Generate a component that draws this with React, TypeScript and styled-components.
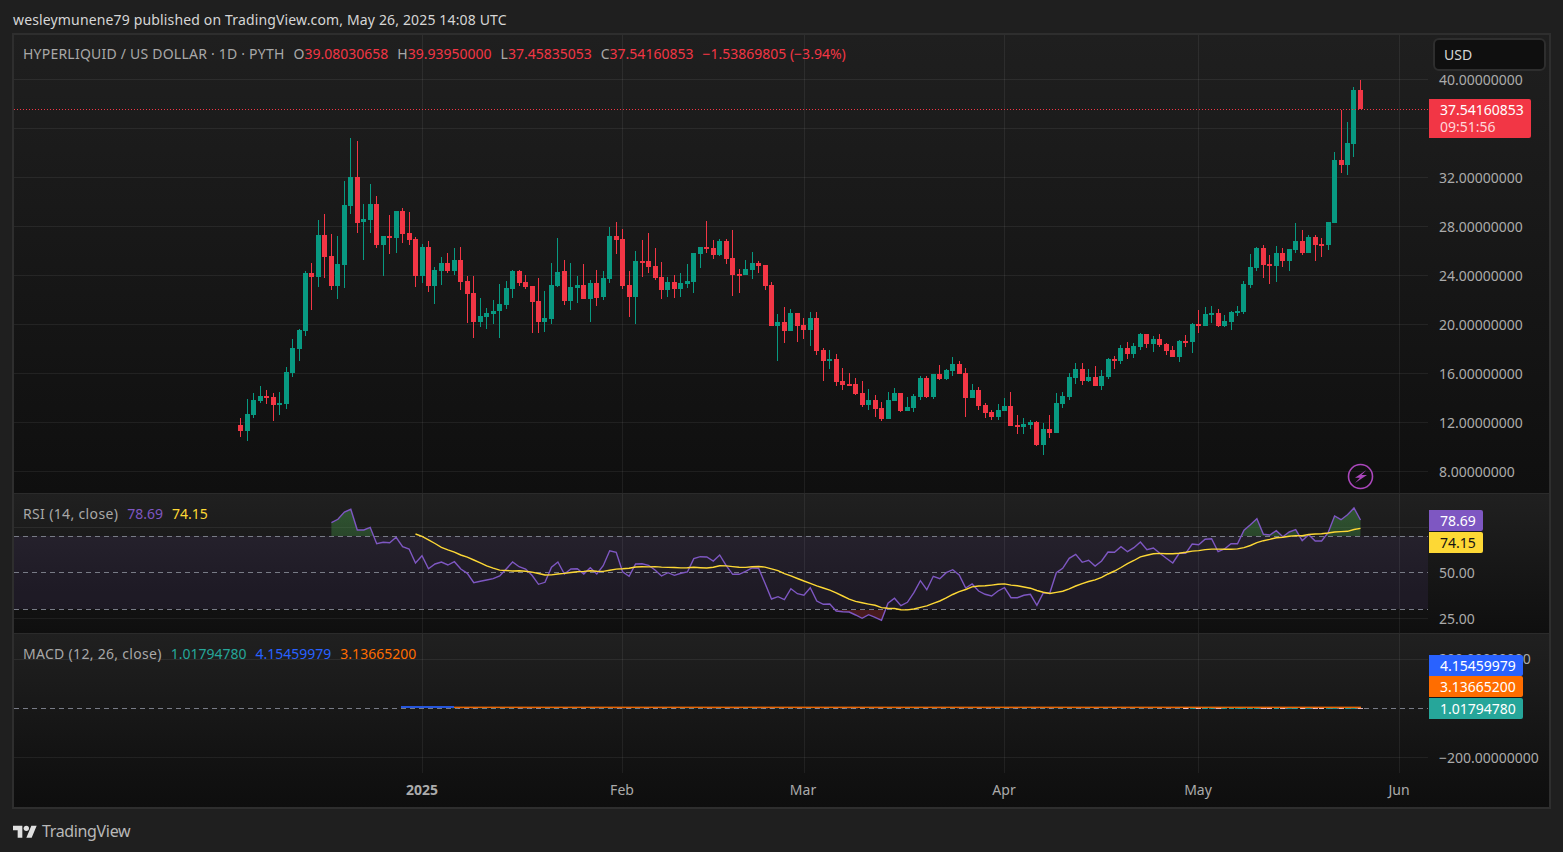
import React from "react";
import styled, { createGlobalStyle } from "styled-components";

const UP = "#089981";
const DOWN = "#f23645";
const GRID = "rgba(255, 255, 255, 0.065)";
const GUIDE = "#787b86";
const PURPLE = "#7e57c2";
const YELLOW = "#fdd835";
const GRID_X = [422, 622, 804, 1004, 1198, 1399];

type Row = [number, number, number, number, number];

// rows are [up, wickTop, bodyTop, bodyBottom, wickBottom], read off 3x crops
const rows = (offset: number, list: Row[]) =>
  list.map(([up, wt, bt, bb, wb]) => ({
    up: up === 1,
    wickTop: Math.round(offset + wt / 3),
    bodyTop: Math.round(offset + bt / 3),
    bodyBottom: Math.round(offset + bb / 3),
    wickBottom: Math.round(offset + wb / 3),
  }));

const candles = [
  ...rows(130, [
    [0, 865, 885, 903, 920], [1, 808, 852, 903, 932], [1, 790, 810, 855, 863], [1, 769, 798, 813, 818],
    [0, 781, 798, 804, 821], [0, 790, 801, 825, 873], [1, 786, 819, 821, 855], [1, 712, 726, 822, 837],
    [1, 628, 654, 729, 740], [1, 597, 600, 657, 693], [1, 423, 429, 603, 617], [0, 400, 429, 441, 540],
    [1, 270, 315, 441, 471], [0, 252, 315, 381, 444], [0, 312, 378, 468, 480], [1, 318, 402, 468, 507],
    [1, 153, 225, 405, 474], [1, 24, 141, 228, 252], [0, 33, 141, 279, 309], [1, 222, 267, 276, 390],
    [1, 162, 222, 270, 309], [0, 198, 222, 345, 354], [1, 318, 318, 345, 438], [0, 255, 318, 324, 372],
    [1, 243, 243, 324, 369], [0, 234, 243, 312, 339], [0, 246, 309, 330, 345], [0, 321, 327, 438, 471],
    [1, 342, 351, 438, 459], [0, 333, 351, 468, 486], [1, 411, 420, 468, 522], [1, 381, 399, 423, 465],
    [0, 369, 399, 423, 429], [1, 354, 390, 423, 435], [0, 351, 390, 456, 480], [0, 438, 453, 492, 579],
    [0, 438, 489, 576, 624], [1, 504, 558, 576, 591], [1, 534, 549, 561, 597], [1, 510, 543, 552, 582],
    [1, 462, 522, 543, 624], [1, 453, 474, 525, 537], [1, 420, 423, 477, 504], [0, 420, 423, 459, 468],
    [0, 435, 456, 471, 477],
  ]),
  ...rows(210, [
    [0, 228, 228, 276, 369], [0, 204, 273, 336, 369], [1, 243, 324, 336, 366], [1, 159, 225, 327, 342],
    [1, 84, 186, 228, 231], [0, 150, 183, 273, 285], [1, 159, 231, 273, 300], [1, 198, 225, 234, 279],
    [0, 162, 225, 267, 267], [1, 210, 219, 267, 336], [0, 180, 219, 264, 288], [1, 183, 204, 261, 270],
    [1, 51, 78, 207, 219], [0, 36, 78, 90, 132], [0, 57, 87, 228, 237], [0, 183, 225, 261, 321],
    [1, 123, 153, 261, 342], [0, 90, 153, 156, 201], [0, 69, 153, 171, 189], [0, 114, 168, 204, 210],
    [0, 156, 201, 240, 267], [1, 201, 216, 240, 261], [0, 195, 216, 237, 264], [1, 189, 219, 237, 261],
    [1, 162, 213, 222, 234], [1, 129, 129, 216, 249], [1, 111, 111, 132, 174], [0, 33, 111, 114, 129],
    [0, 90, 114, 135, 147], [1, 87, 93, 135, 138], [0, 87, 93, 147, 162], [0, 60, 144, 195, 258],
    [0, 177, 192, 195, 249], [1, 150, 177, 195, 195], [1, 126, 159, 180, 207], [0, 153, 159, 168, 189],
    [0, 165, 165, 228, 240], [0, 216, 225, 348, 348], [1, 312, 336, 348, 453], [0, 291, 336, 363, 399],
    [1, 297, 309, 363, 363], [0, 309, 309, 348, 396], [0, 324, 345, 360, 387], [1, 306, 324, 360, 408],
    [0, 306, 324, 423, 435],
  ]),
  ...rows(300, [
    [0, 144, 150, 183, 243], [1, 150, 177, 183, 207], [0, 162, 177, 246, 258], [0, 204, 243, 255, 270],
    [0, 219, 252, 255, 255], [0, 234, 252, 282, 285], [0, 243, 279, 315, 321], [1, 267, 300, 315, 330],
    [0, 285, 300, 327, 351], [0, 306, 324, 357, 363], [1, 276, 300, 357, 357], [1, 264, 279, 303, 303],
    [0, 279, 279, 333, 336], [1, 291, 321, 333, 333], [1, 282, 288, 324, 336], [1, 228, 234, 291, 300],
    [0, 228, 234, 291, 294], [1, 222, 222, 291, 297], [0, 195, 222, 237, 240], [1, 207, 210, 237, 240],
    [1, 171, 192, 213, 228], [0, 183, 192, 222, 222], [0, 204, 219, 294, 351], [1, 252, 270, 294, 294],
    [0, 261, 270, 318, 330], [0, 309, 315, 339, 354], [0, 330, 336, 351, 360], [1, 312, 330, 351, 360],
    [1, 294, 318, 333, 333], [0, 276, 318, 378, 378], [0, 345, 375, 378, 402], [1, 354, 372, 381, 402],
    [1, 360, 366, 375, 387], [0, 363, 366, 435, 438],
  ]),
  ...rows(210, [
    [1, 639, 657, 705, 735], [0, 615, 657, 669, 684], [1, 549, 579, 669, 669], [1, 546, 558, 582, 594],
    [1, 489, 501, 561, 570], [1, 459, 477, 504, 522], [0, 459, 477, 513, 525], [1, 477, 501, 513, 516],
    [0, 468, 501, 528, 528], [1, 480, 498, 528, 540], [1, 444, 447, 501, 507], [0, 438, 447, 450, 477],
    [1, 405, 414, 453, 462], [0, 396, 414, 432, 447], [1, 399, 408, 432, 444], [1, 369, 372, 411, 420],
    [0, 372, 372, 402, 414], [1, 378, 387, 402, 426], [0, 372, 387, 405, 411], [0, 399, 402, 423, 435],
    [0, 408, 420, 441, 441], [1, 390, 393, 441, 456], [0, 375, 393, 396, 411], [1, 339, 342, 396, 429],
    [0, 300, 342, 345, 369], [1, 291, 312, 348, 348], [1, 288, 309, 315, 339], [0, 297, 309, 348, 351],
    [1, 315, 333, 348, 351], [1, 303, 306, 336, 360], [1, 288, 303, 309, 318], [1, 213, 222, 306, 312],
    [1, 132, 171, 225, 234], [1, 111, 114, 174, 183], [0, 105, 114, 165, 204], [0, 135, 162, 165, 222],
    [1, 108, 129, 168, 216], [0, 114, 129, 153, 171], [1, 117, 117, 153, 183], [1, 39, 93, 120, 129],
    [0, 60, 93, 129, 135], [1, 75, 81, 129, 129], [0, 75, 81, 105, 153], [0, 84, 102, 105, 141],
    [1, 36, 36, 105, 120],
  ]),
  ...rows(30, [
    [1, 366, 390, 579, 579], [0, 240, 390, 405, 429], [1, 276, 339, 405, 435], [1, 171, 180, 342, 381],
    [0, 150, 180, 238, 238],
  ]),
];

const RSI_START = 14;
const rsiRaw = [
  68, 58, 36, 28, 90, 90, 82, 131, 127, 128, 112, 140, 147, 189, 167, 206, 192, 186, 195, 185,
  207, 220, 248, 244, 240, 236, 228, 207, 186, 200, 207, 226, 253, 247, 202, 186, 222, 207, 206, 222,
  203, 222, 197, 152, 157, 215, 229, 192, 191, 196, 210, 228, 218, 226, 220, 216, 176, 170, 171, 183,
  165, 197, 223, 223, 214, 204, 205, 250, 297, 290, 299, 266, 281, 286, 263, 303, 313, 312, 333,
  335, 336, 345, 355, 344, 352, 361, 310, 295, 317, 307, 278, 242, 269, 229, 236, 218, 209, 225, 264,
  252, 273, 283, 288, 273, 263, 293, 293, 286, 283, 316, 279, 279, 218, 205, 175, 163, 187, 181, 198,
  183, 156, 157, 140, 155, 143, 126, 149, 144, 160, 175, 189, 160, 160, 132, 134, 118, 116, 155, 147,
  131, 131, 91, 74, 56, 103, 105, 92, 110, 96, 89, 122, 104, 123, 123, 98, 48, 59, 44, 24, 60,
];

const candleX = (i: number) => Math.round(240.3 + i * 6.472);
const lineX = (i: number) => 240.8 + i * 6.472;

const rsiPoints = rsiRaw.map((v, i) => ({ x: lineX(i + RSI_START), y: 500 + v / 3 }));
const maPoints = rsiRaw
  .map((_, i) => {
    if (i < 13) return null;
    const sum = rsiRaw.slice(i - 13, i + 1).reduce((a, b) => a + b, 0);
    return { x: lineX(i + RSI_START), y: 500 + sum / 14 / 3 };
  })
  .filter((p): p is { x: number; y: number } => p !== null);

const toPath = (pts: { x: number; y: number }[]) =>
  pts.map((p) => `${p.x.toFixed(1)},${p.y.toFixed(1)}`).join(" ");

const areaTo = (level: number) => {
  const first = rsiPoints[0];
  const last = rsiPoints[rsiPoints.length - 1];
  return `${first.x},${level} ${toPath(rsiPoints)} ${last.x},${level}`;
};

const GlobalStyle = createGlobalStyle`
  html, body {
    margin: 0;
    background: #1f1f1f;
  }
  body {
    font-family: "Noto Sans", "Open Sans", sans-serif;
    overflow: hidden;
  }
`;

const Page = styled.div`
  width: 1563px;
  height: 852px;
  display: flex;
  flex-direction: column;
  background: #1f1f1f;
`;

const Header = styled.div`
  height: 33px;
  padding: 5px 0 0 13px;
  box-sizing: border-box;
  display: flex;
  align-items: center;
  font-size: 14px;
  letter-spacing: 0.15px;
  color: #d6d6d6;
`;

const ChartFrame = styled.div`
  width: 1539px;
  margin-left: 12px;
  box-sizing: border-box;
  border: 2px solid #2e2e2e;
  display: flex;
  flex-direction: column;
`;

const Pane = styled.div<{ $height: number; $from: string; $to: string; $divider?: boolean }>`
  height: ${(p) => p.$height}px;
  box-sizing: border-box;
  display: grid;
  grid-template-columns: 1414px 121px;
  background: linear-gradient(${(p) => p.$from}, ${(p) => p.$to});
  border-bottom: ${(p) => (p.$divider ? "1px solid #2b2b2b" : "none")};
`;

const Plot = styled.div`
  position: relative;
  overflow: hidden;
`;

const PlotSvg = styled.svg`
  display: block;
`;

const PriceAxis = styled.div`
  position: relative;
`;

const Legend = styled.div<{ $top: number }>`
  position: absolute;
  top: ${(p) => p.$top}px;
  left: 9px;
  display: flex;
  gap: 9px;
  font-size: 14px;
  line-height: 20px;
  white-space: nowrap;
  color: #a8a8a8;
`;

const LegendName = styled.span<{ $spacing: number }>`
  letter-spacing: ${(p) => p.$spacing}px;
`;

const LegendValue = styled.span<{ $color: string }>`
  color: ${(p) => p.$color};
`;

const AxisLabel = styled.div<{ $y: number }>`
  position: absolute;
  left: 11px;
  top: ${(p) => p.$y}px;
  transform: translateY(-50%);
  font-size: 14px;
  line-height: 20px;
  color: #ababab;
  white-space: nowrap;
`;

const PriceTag = styled.div<{ $top: number; $height: number; $width: number; $bg: string; $color: string }>`
  position: absolute;
  left: 1px;
  top: ${(p) => p.$top}px;
  width: ${(p) => p.$width}px;
  height: ${(p) => p.$height}px;
  box-sizing: border-box;
  padding-left: 11px;
  display: flex;
  flex-direction: column;
  justify-content: center;
  background: ${(p) => p.$bg};
  color: ${(p) => p.$color};
  border-radius: 0 2px 2px 0;
  font-size: 14px;
  line-height: 17px;
  white-space: nowrap;
`;

const LastPriceTag = styled(PriceTag)`
  padding-bottom: 2px;
`;

const Countdown = styled.span`
  color: #ffd5d8;
`;

const CurrencyButton = styled.div`
  position: absolute;
  top: 3px;
  left: 5px;
  width: 113px;
  height: 33px;
  box-sizing: border-box;
  padding-left: 9px;
  display: flex;
  align-items: center;
  background: #0f0f0f;
  border: 2px solid #2e2e2e;
  border-radius: 6px;
  font-size: 14px;
  color: #d6d6d6;
`;

const TimeAxis = styled.div`
  position: relative;
  height: 34px;
  background: linear-gradient(#111111, #0e0e0e);
`;

const TimeLabel = styled.div<{ $x: number; $bold?: boolean }>`
  position: absolute;
  top: 7px;
  left: ${(p) => p.$x}px;
  transform: translateX(-50%);
  font-size: 14px;
  line-height: 20px;
  font-weight: ${(p) => (p.$bold ? 700 : 400)};
  color: #ababab;
`;

const Footer = styled.div`
  flex: 1;
  padding-left: 13px;
  display: flex;
  align-items: center;
  gap: 5px;
`;

const Wordmark = styled.span`
  font-size: 16px;
  letter-spacing: -0.35px;
  color: #b8b8b8;
`;

const VerticalGrid = ({ top, bottom }: { top: number; bottom: number }) => (
  <g shapeRendering="crispEdges">
    {GRID_X.map((x) => (
      <line key={x} x1={x + 0.5} x2={x + 0.5} y1={top} y2={bottom} stroke={GRID} />
    ))}
  </g>
);

const HorizontalGrid = ({ levels }: { levels: number[] }) => (
  <g shapeRendering="crispEdges">
    {levels.map((y) => (
      <line key={y} x1={14} x2={1428} y1={y + 0.5} y2={y + 0.5} stroke={GRID} />
    ))}
  </g>
);

const Guide = ({ y }: { y: number }) => (
  <line x1={14} x2={1428} y1={y + 0.5} y2={y + 0.5} stroke={GUIDE} strokeDasharray="5 4" shapeRendering="crispEdges" />
);

const CandleSeries = () => (
  <g shapeRendering="crispEdges">
    {candles.map((c, i) => {
      const x = candleX(i);
      const fill = c.up ? UP : DOWN;
      return (
        <g key={i} fill={fill}>
          <rect x={x} y={c.wickTop} width={1} height={Math.max(c.wickBottom - c.wickTop, 1)} />
          <rect x={x - 2} y={c.bodyTop} width={5} height={Math.max(c.bodyBottom - c.bodyTop, 2)} />
        </g>
      );
    })}
  </g>
);

const MainPlot = () => (
  <PlotSvg width={1414} height={458} viewBox="14 35 1414 458">
    <VerticalGrid top={35} bottom={493} />
    <HorizontalGrid levels={[79, 128, 177, 226, 275, 324, 373, 422, 471]} />
    <CandleSeries />
    <line x1={14} x2={1428} y1={109.5} y2={109.5} stroke={DOWN} strokeDasharray="1 2" shapeRendering="crispEdges" />
    <circle cx={1360.5} cy={476.5} r={12} fill="none" stroke="#ab47bc" strokeWidth={1.6} />
    <path d="M1366.5 470 L1355 477.8 L1360 477.8 L1355 483 L1367 475 L1361.5 475 Z" fill="#ab47bc" />
  </PlotSvg>
);

const RsiPlot = () => (
  <PlotSvg width={1414} height={139} viewBox="14 494 1414 139">
    <defs>
      <linearGradient id="overbought" x1="0" y1="0" x2="0" y2="1">
        <stop offset="0" stopColor="#4caf50" stopOpacity={0.38} />
        <stop offset="1" stopColor="#4caf50" stopOpacity={0.05} />
      </linearGradient>
      <linearGradient id="oversold" x1="0" y1="0" x2="0" y2="1">
        <stop offset="0" stopColor="#f23645" stopOpacity={0.05} />
        <stop offset="1" stopColor="#f23645" stopOpacity={0.25} />
      </linearGradient>
      <clipPath id="aboveBand">
        <rect x={14} y={494} width={1414} height={42} />
      </clipPath>
      <clipPath id="belowBand">
        <rect x={14} y={610} width={1414} height={23} />
      </clipPath>
    </defs>
    <rect x={14} y={536} width={1414} height={73} fill={PURPLE} fillOpacity={0.1} />
    <VerticalGrid top={494} bottom={633} />
    <HorizontalGrid levels={[527, 618]} />
    <Guide y={536} />
    <Guide y={572} />
    <Guide y={609} />
    <polygon points={areaTo(536)} fill="url(#overbought)" clipPath="url(#aboveBand)" />
    <polygon points={areaTo(609)} fill="url(#oversold)" clipPath="url(#belowBand)" />
    <polyline points={toPath(rsiPoints)} fill="none" stroke={PURPLE} strokeWidth={1.4} />
    <polyline points={toPath(maPoints)} fill="none" stroke={YELLOW} strokeWidth={1.4} />
  </PlotSvg>
);

const MacdPlot = () => (
  <PlotSvg width={1414} height={139} viewBox="14 634 1414 139">
    <VerticalGrid top={634} bottom={773} />
    <HorizontalGrid levels={[659, 757]} />
    <Guide y={708} />
    <g shapeRendering="crispEdges">
      {candles.map((c, i) =>
        i < 33 ? null : (
          <rect
            key={i}
            x={candleX(i) - 2}
            y={708}
            width={5}
            height={1}
            fill={c.up ? "#26a69a" : "#ffcdd2"}
            fillOpacity={i > 145 ? 0.85 : 0.15}
          />
        )
      )}
      <rect x={401} y={706} width={53} height={2} fill="#2962ff" fillOpacity={0.85} />
      <rect x={454} y={707} width={907} height={1} fill="#ff6d00" fillOpacity={0.9} />
      <rect x={454} y={706} width={907} height={1} fill="#ff6d00" fillOpacity={0.35} />
    </g>
  </PlotSvg>
);

const TradingViewLogo = () => (
  <svg width={24} height={16} viewBox="0 0 36 24" fill="#e0e0e0">
    <path d="M14 22H7V11H0V4h14v18zM28 22h-8l7.5-18h8L28 22z" />
    <circle cx={20} cy={8} r={4} />
  </svg>
);

const App = () => (
  <Page>
    <GlobalStyle />
    <Header>wesleymunene79 published on TradingView.com, May 26, 2025 14:08 UTC</Header>
    <ChartFrame>
      <Pane $height={459} $from="#1f1f1f" $to="#0f0f0f" $divider>
        <Plot>
          <MainPlot />
          <Legend $top={9}>
            <LegendName $spacing={0.22}>HYPERLIQUID / US DOLLAR · 1D · PYTH</LegendName>
            <span>O<LegendValue $color={DOWN}>39.08030658</LegendValue></span>
            <span>H<LegendValue $color={DOWN}>39.93950000</LegendValue></span>
            <span>L<LegendValue $color={DOWN}>37.45835053</LegendValue></span>
            <span>C<LegendValue $color={DOWN}>37.54160853</LegendValue></span>
            <LegendValue $color={DOWN}>−1.53869805 (−3.94%)</LegendValue>
          </Legend>
        </Plot>
        <PriceAxis>
          <AxisLabel $y={45}>40.00000000</AxisLabel>
          <AxisLabel $y={143}>32.00000000</AxisLabel>
          <AxisLabel $y={192}>28.00000000</AxisLabel>
          <AxisLabel $y={241}>24.00000000</AxisLabel>
          <AxisLabel $y={290}>20.00000000</AxisLabel>
          <AxisLabel $y={339}>16.00000000</AxisLabel>
          <AxisLabel $y={388}>12.00000000</AxisLabel>
          <AxisLabel $y={437}>8.00000000</AxisLabel>
          <CurrencyButton>USD</CurrencyButton>
          <LastPriceTag $top={64} $height={39} $width={102} $bg={DOWN} $color="#ffffff">
            <span>37.54160853</span>
            <Countdown>09:51:56</Countdown>
          </LastPriceTag>
        </PriceAxis>
      </Pane>
      <Pane $height={140} $from="#202020" $to="#0f0f0f" $divider>
        <Plot>
          <RsiPlot />
          <Legend $top={10}>
            <LegendName $spacing={0.35}>RSI (14, close)</LegendName>
            <LegendValue $color={PURPLE}>78.69</LegendValue>
            <LegendValue $color={YELLOW}>74.15</LegendValue>
          </Legend>
        </Plot>
        <PriceAxis>
          <AxisLabel $y={79}>50.00</AxisLabel>
          <AxisLabel $y={125}>25.00</AxisLabel>
          <PriceTag $top={16} $height={21} $width={54} $bg={PURPLE} $color="#ffffff">78.69</PriceTag>
          <PriceTag $top={38} $height={21} $width={54} $bg={YELLOW} $color="#131313">74.15</PriceTag>
        </PriceAxis>
      </Pane>
      <Pane $height={139} $from="#202020" $to="#111111">
        <Plot>
          <MacdPlot />
          <Legend $top={10}>
            <LegendName $spacing={0.3}>MACD (12, 26, close)</LegendName>
            <LegendValue $color="#26a69a">1.01794780</LegendValue>
            <LegendValue $color="#2962ff">4.15459979</LegendValue>
            <LegendValue $color="#ff6d00">3.13665200</LegendValue>
          </Legend>
        </Plot>
        <PriceAxis>
          <AxisLabel $y={25}>200.00000000</AxisLabel>
          <AxisLabel $y={124}>−200.00000000</AxisLabel>
          <PriceTag $top={21} $height={21} $width={94} $bg="#2962ff" $color="#ffffff">4.15459979</PriceTag>
          <PriceTag $top={42} $height={21} $width={94} $bg="#ff6d00" $color="#ffffff">3.13665200</PriceTag>
          <PriceTag $top={64} $height={21} $width={94} $bg="#26a69a" $color="#ffffff">1.01794780</PriceTag>
        </PriceAxis>
      </Pane>
      <TimeAxis>
        <TimeLabel $x={408} $bold>2025</TimeLabel>
        <TimeLabel $x={608}>Feb</TimeLabel>
        <TimeLabel $x={789}>Mar</TimeLabel>
        <TimeLabel $x={990}>Apr</TimeLabel>
        <TimeLabel $x={1184}>May</TimeLabel>
        <TimeLabel $x={1385}>Jun</TimeLabel>
      </TimeAxis>
    </ChartFrame>
    <Footer>
      <TradingViewLogo />
      <Wordmark>TradingView</Wordmark>
    </Footer>
  </Page>
);

export default App;
